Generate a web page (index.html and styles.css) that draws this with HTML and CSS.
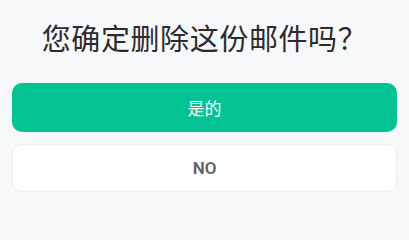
FILE: index.html
```html
<!DOCTYPE html>
<html lang="zh">
<head>
<meta charset="utf-8">
<link rel="stylesheet" href="styles.css">
</head>
<body>
<div class="dialog">
  <div class="title">您确定删除这份邮件吗？</div>
  <div class="actions">
    <button class="btn btn-primary">是的</button>
    <button class="btn btn-default">NO</button>
  </div>
</div>
</body>
</html>
```
FILE: styles.css
```css
html, body {
  margin: 0;
  padding: 0;
  background: #f7f8fa;
}
body {
  width: 409px;
  height: 205px;
  overflow: hidden;
  font-family: Roboto, "Noto Sans CJK SC", sans-serif;
}
.dialog {
  padding: 16px 12px 0;
}
.title {
  font-family: "Noto Sans CJK SC", sans-serif;
  font-size: 29px;
  line-height: 42px;
  letter-spacing: 0.6px;
  color: #2b2b2d;
  text-align: center;
  white-space: nowrap;
  margin-bottom: 25px;
}
.actions {
  display: flex;
  flex-direction: column;
  gap: 12px;
}
.btn {
  display: block;
  width: 100%;
  box-sizing: border-box;
  border-radius: 10px;
  font-family: Roboto, "Noto Sans CJK SC", sans-serif;
  font-size: 17px;
  padding: 0;
  cursor: pointer;
}
.btn-primary {
  height: 49px;
  background: #03c392;
  border: none;
  color: #fff;
}
.btn-default {
  height: 48px;
  background: #fff;
  border: 1px solid #ebedf0;
  color: #5d5e61;
  font-weight: 600;
}
```
